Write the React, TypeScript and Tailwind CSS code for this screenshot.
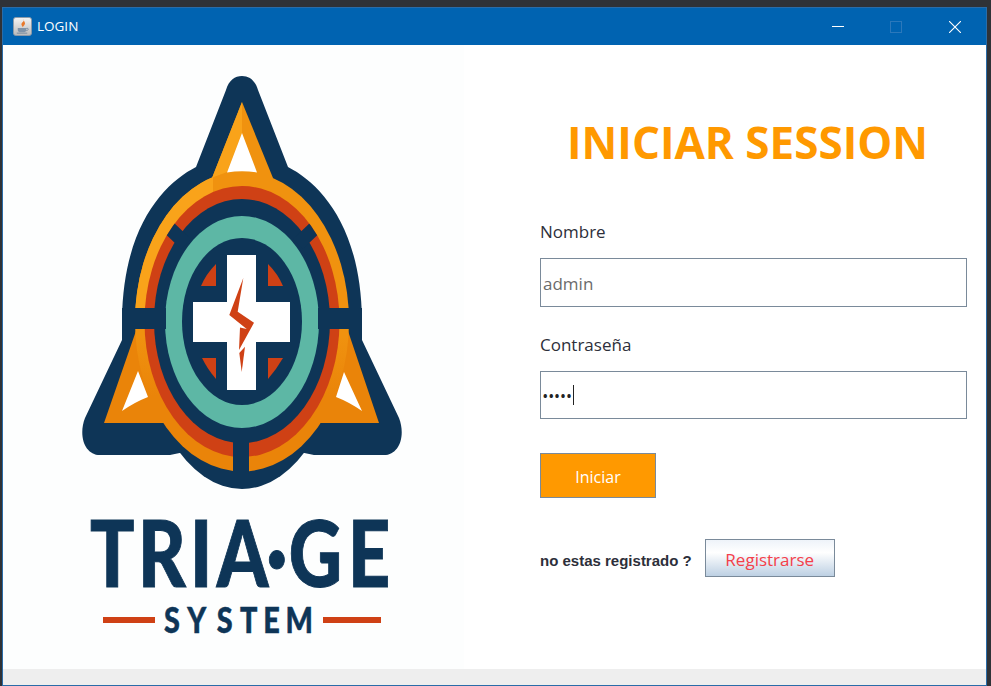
const NAVY = '#0e3557';
const TEAL = '#5db7a5';
const RED = '#cf4115';
const ORANGE = '#f0920f';
const LIGHT = '#f9a31a';
const DARK_ORANGE = '#ea8409';

function JavaIcon() {
  return (
    <svg width="19" height="19" viewBox="0 0 20 20">
      <defs>
        <linearGradient id="jv" x1="0" y1="0" x2="0" y2="1">
          <stop offset="0" stopColor="#f4f4f4" />
          <stop offset="1" stopColor="#b9b9b9" />
        </linearGradient>
      </defs>
      <rect x="0.5" y="0.5" width="19" height="19" rx="2.5" fill="url(#jv)" stroke="#8d9aa8" />
      <path d="M11 2c2 2.5-3 3.5-2 6.5.3 1 1 1.7 1.5 2.3 0-1.7 3-2.6 1.9-5C12 4.6 11.4 3.6 11 2z" fill="#e8782a" />
      <path d="M5 11.5h9v2.2c0 1.3-1 2.3-2.3 2.3H7.3C6 16 5 15 5 13.7z" fill="#7f93a8" />
      <path d="M14 12h1.4c1 0 1 2.2-1.4 2.4M4 17h11" fill="none" stroke="#7488a0" strokeWidth="1" />
    </svg>
  );
}

function TriageLogo() {
  return (
    <svg width="461" height="624" viewBox="3 45 461 624">
      <defs>
        <clipPath id="ringClip">
          <ellipse cx="242" cy="321.5" rx="97.5" ry="135.5" />
        </clipPath>
        <clipPath id="upperLeft">
          <rect x="100" y="150" width="113" height="160" />
        </clipPath>
        <linearGradient id="ringFill" gradientUnits="userSpaceOnUse" x1="0" y1="172" x2="0" y2="471">
          <stop offset="0.55" stopColor={ORANGE} />
          <stop offset="0.75" stopColor={DARK_ORANGE} />
        </linearGradient>
      </defs>

      {/* silhouette */}
      <ellipse cx="242" cy="321.5" rx="100" ry="167.5" fill={NAVY} />
      <path
        d="M226 90C229 80 235 76 242 76C249 76 255 80 258 90L288 167C319 183 361 225 362 320V340L399 418C406 436 399 455 384 455H314L242 440L170 455H100C85 455 78 436 85 418L122 340V320C123 225 165 183 196 167Z"
        fill={NAVY}
      />

      {/* lower corners and top spike */}
      <path d="M137 328L104 423H163L242 420L321 423H379L347 328Z" fill={DARK_ORANGE} />
      <path d="M242 102L273 178L242 195L212 178Z" fill={ORANGE} />
      <path d="M242 102V133L227 172L212 178Z" fill={LIGHT} />
      <ellipse cx="242" cy="321.5" rx="107" ry="150" fill="url(#ringFill)" />
      <ellipse cx="242" cy="321.5" rx="107" ry="150" fill={LIGHT} clipPath="url(#upperLeft)" />
      <path d="M242 133L257 172.5Q242 170 227 172.5Z" fill="#fff" />
      <path d="M138 371L148 397Q135 402 122 411Z" fill="#fff" />
      <path d="M344 372L336 397Q349 402 362 411Z" fill="#fff" />

      {/* rings */}
      <ellipse cx="242" cy="321.5" rx="97.5" ry="135.5" fill={RED} />
      <ellipse cx="242" cy="321" rx="88" ry="122" fill={NAVY} />
      <g clipPath="url(#ringClip)">
        <path d="M186 244L163 222M298 244L321 222" stroke={NAVY} strokeWidth="14" />
      </g>
      <ellipse cx="242" cy="322" rx="77" ry="106" fill={TEAL} />
      <ellipse cx="242" cy="321.5" rx="60" ry="83.5" fill={NAVY} />

      {/* bars */}
      <rect x="122" y="308" width="44" height="21" fill={NAVY} />
      <rect x="318" y="308" width="44" height="21" fill={NAVY} />
      <rect x="233" y="440" width="16" height="40" fill={NAVY} />

      {/* cross quadrants */}
      <path d="M216 264Q206 274 201 286H216Z" fill={RED} />
      <path d="M268 264Q278 274 283 286H268Z" fill={RED} />
      <path d="M202 358H216V379Q208 370 202 358Z" fill={RED} />
      <path d="M283 358H268V379Q276 370 283 358Z" fill={RED} />
      <path d="M227 255H256V302H290V342H256V390H227V342H193V302H227Z" fill="#fff" />

      {/* bolt */}
      <path d="M243.3 278L229.3 315L246.7 329L240 327.5L239 350L254 322.7L237.7 311.7Z" fill={RED} />
      <path d="M245 346.7L239.3 353L241.7 372Z" fill={RED} />

      {/* wordmark, narrowed with a horizontal scale */}
      <text
        transform="scale(0.8 1)"
        x="112.5 172.5 237.5 271 333 361 435"
        y="587"
        fill={NAVY}
        stroke={NAVY}
        strokeWidth="1"
        className="font-['Lato',sans-serif] text-[92px] font-black"
      >
        TRIA·GE
      </text>
      <rect x="103" y="617" width="52" height="6" fill={RED} />
      <rect x="323" y="617" width="58" height="6" fill={RED} />
      <text
        transform="scale(0.8 1)"
        x="205 234 271 300 329 357"
        y="633"
        fill={NAVY}
        stroke={NAVY}
        strokeWidth="0.5"
        className="font-['Lato',sans-serif] text-[36px] font-black"
      >
        SYSTEM
      </text>
    </svg>
  );
}

export default function App() {
  return (
    <div className="h-[686px] w-[991px] overflow-hidden bg-[#2f3237] pl-[2px] pt-[7px] font-['Open_Sans',sans-serif]">
      <div className="flex h-[679px] w-[985px] flex-col border border-[#2a6ca8] bg-white">
        <div className="flex h-[37px] items-center bg-[#0063b1] pl-[10px] text-white">
          <JavaIcon />
          <span className="ml-[5px] text-[13.5px]">LOGIN</span>
          <div className="ml-auto flex items-center">
            <div className="h-px w-[12px] bg-white" />
            <div className="ml-[46px] size-[12px] border border-[#2b78bb]" />
            <svg className="ml-[47px] mr-[25px]" width="12" height="12" viewBox="0 0 12 12">
              <path d="M0 0L12 12M12 0L0 12" stroke="#fff" strokeWidth="1.1" />
            </svg>
          </div>
        </div>

        <div className="flex h-[624px]">
          <div className="w-[461px] bg-[#fdfefe]">
            <TriageLogo />
          </div>
          <div className="flex flex-1 flex-col pl-[76px] pr-[19px] pt-[67px]">
            <h1 className="ml-[27px] text-[44px] font-bold leading-[60px] text-[#ff9900]">INICIAR SESSION</h1>
            <label className="mt-[45px] text-[17px] leading-[30px] text-[#2d2f3a]">Nombre</label>
            <div className="mt-[11px] flex h-[49px] items-center border border-[#7a8a9a] pl-[2px] pt-[3px] text-[17px] text-[#6b6b6b]">
              admin
            </div>
            <label className="mt-[23px] text-[17px] leading-[30px] text-[#2d2f3a]">Contraseña</label>
            <div className="mt-[11px] flex h-[48px] items-center border border-[#7a8a9a] pl-[2px] text-[#222]">
              <span className="pt-[3px] text-[12px] font-bold tracking-[1.4px]">•••••</span>
              <span className="h-[20px] w-px bg-[#222]" />
            </div>
            <button className="mt-[34px] h-[45px] w-[116px] border border-[#7a8a9a] bg-[#ff9900] pt-[2px] text-[16px] text-white">
              Iniciar
            </button>
            <div className="mt-[41px] flex items-center">
              <span className="pt-[6px] font-['Liberation_Sans',sans-serif] text-[15px] font-bold text-[#2d2f3a]">
                no estas registrado ?
              </span>
              <button className="ml-[13px] h-[38px] w-[130px] border border-[#7a8a9a] bg-[linear-gradient(#eef3f9,#ffffff_35%,#bdd0e3)] pt-[3px] text-[17px] text-[#f4404a]">
                Registrarse
              </button>
            </div>
          </div>
        </div>

        <div className="flex-1 bg-[#eeeeee]" />
      </div>
    </div>
  );
}
